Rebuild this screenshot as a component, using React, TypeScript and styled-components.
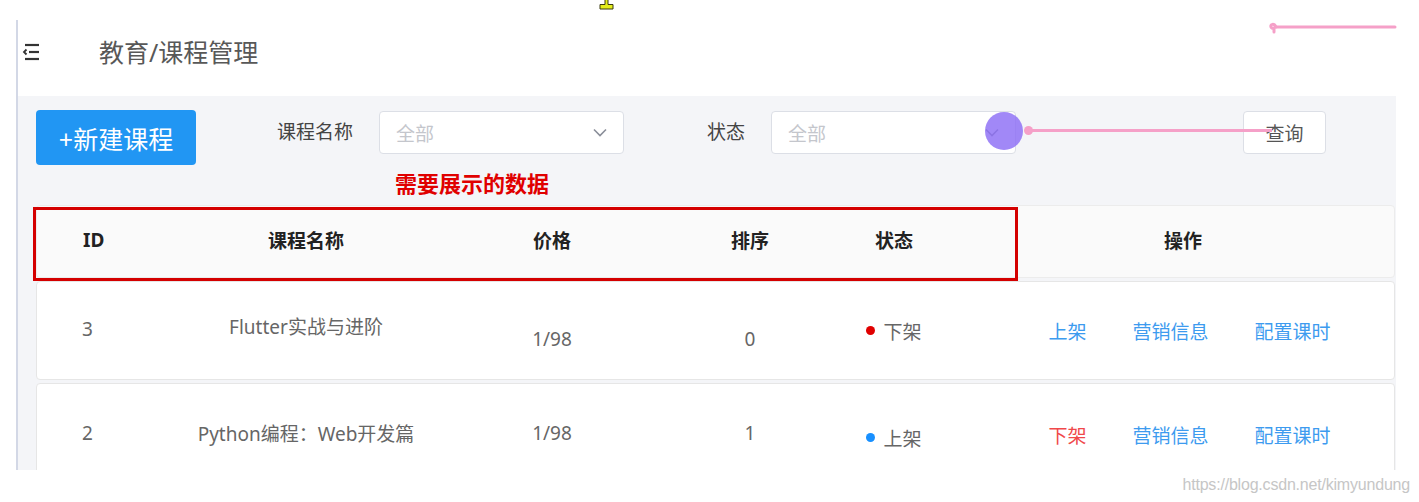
import styled, { createGlobalStyle } from 'styled-components';

const GlobalStyle = createGlobalStyle`
  html, body { margin: 0; padding: 0; background: #fff; }
  body { font-family: "Noto Sans", "Noto Sans CJK SC", sans-serif; }
  * { box-sizing: border-box; }
`;

const COLS = '144px 250px 242px 154px 134px 1fr';

const Page = styled.div`
  position: relative;
  width: 1419px;
  height: 502px;
  overflow: hidden;
  padding: 20px 0 0 16px;
`;

const Frame = styled.div`
  width: 1380px;
  height: 450px;
  border-left: 2px solid #d3d8e6;
  display: flex;
  flex-direction: column;
`;

const Header = styled.div`
  height: 76px;
  flex-shrink: 0;
  display: flex;
  align-items: center;
  padding: 0 0 12px 4px;
`;

const Title = styled.h1`
  margin: 0 0 0 60px;
  font-size: 25px;
  font-weight: 400;
  color: #585858;
  line-height: 34px;
`;

const Content = styled.div`
  flex: 1;
  background: #f4f5f8;
  padding: 14px 1px 0 18px;
  overflow: hidden;
`;

const Toolbar = styled.div`
  display: flex;
  align-items: flex-start;
  height: 55px;
`;

const PrimaryButton = styled.button`
  width: 160px;
  height: 55px;
  border: none;
  border-radius: 4px;
  background: #2196f3;
  color: #fff;
  font-family: inherit;
  font-size: 25px;
  padding: 0;
`;

const FieldLabel = styled.span<{ $gap: number }>`
  margin: 1px 0 0 ${(p) => p.$gap}px;
  line-height: 43px;
  font-size: 19px;
  color: #444;
`;

const Select = styled.div`
  margin: 1px 0 0 26px;
  width: 245px;
  height: 43px;
  background: #fff;
  border: 1px solid #dcdfe6;
  border-radius: 4px;
  display: flex;
  align-items: center;
  justify-content: space-between;
  padding: 0 16px 0 16px;
  font-size: 19px;
  color: #c4c6cc;
`;

const QueryButton = styled.button`
  margin: 1px 0 0 227px;
  width: 83px;
  height: 43px;
  background: #fff;
  border: 1px solid #dcdfe6;
  border-radius: 4px;
  font-family: inherit;
  font-size: 19px;
  color: #555;
  padding: 0;
`;

const Note = styled.div`
  margin: 3px 0 0 359px;
  font-size: 22px;
  font-weight: 700;
  line-height: 30px;
  color: #e00000;
`;

const Table = styled.div`
  position: relative;
  margin-top: 7px;
  width: 1359px;
`;

const HeadRow = styled.div`
  display: grid;
  grid-template-columns: ${COLS};
  height: 73px;
  padding-bottom: 4px;
  background: #fafafa;
  border: 1px solid #ececec;
  border-radius: 4px;
  font-size: 19px;
  font-weight: 700;
  color: #222;
`;

const BodyRow = styled.div`
  display: grid;
  grid-template-columns: ${COLS};
  height: 99px;
  margin-top: 3px;
  background: #fff;
  border: 1px solid #e6e6e6;
  border-radius: 4px;
  font-size: 19px;
  color: #666;
`;

const Cell = styled.div<{ $left?: boolean; $dy?: number; $pl?: number }>`
  display: flex;
  align-items: center;
  justify-content: ${(p) => (p.$left ? 'flex-start' : 'center')};
  padding-left: ${(p) => p.$pl ?? 0}px;
  ${(p) => {
    const dy = p.$dy ?? 0;
    return dy >= 0 ? `padding-top: ${dy * 2}px;` : `padding-bottom: ${-dy * 2}px;`;
  }}
  white-space: nowrap;
`;

const Dot = styled.span<{ $color: string }>`
  width: 9px;
  height: 9px;
  border-radius: 50%;
  background: ${(p) => p.$color};
  margin-right: 8px;
`;

const StatusText = styled.span`
  font-size: 19px;
`;

const Actions = styled.div`
  display: flex;
  gap: 46px;
  font-size: 19px;
`;

const ActionLink = styled.a<{ $danger?: boolean }>`
  color: ${(p) => (p.$danger ? '#f0484a' : '#3d9bef')};
  cursor: pointer;
`;

const Highlight = styled.div`
  position: absolute;
  left: -3px;
  top: 2px;
  width: 985px;
  height: 74px;
  border: 3px solid #d40000;
  pointer-events: none;
`;

const Footer = styled.div`
  display: flex;
  justify-content: flex-end;
  padding: 5px 9px 0 0;
`;

const Watermark = styled.span`
  font-family: "Liberation Sans", sans-serif;
  font-size: 16px;
  line-height: 20px;
  letter-spacing: -0.2px;
  color: #c6c6c6;
`;

const PointerCircle = styled.div`
  position: absolute;
  left: 985px;
  top: 112px;
  width: 38px;
  height: 38px;
  border-radius: 50%;
  background: rgba(140, 110, 245, 0.82);
`;

const PenDot = styled.div`
  position: absolute;
  left: 1024px;
  top: 126px;
  width: 9px;
  height: 9px;
  border-radius: 50%;
  background: #f5a0c8;
`;

const PenLine = styled.div`
  position: absolute;
  left: 1028px;
  top: 129px;
  width: 244px;
  height: 3px;
  background: #f5a0c8;
`;

const TopStroke = styled.svg`
  position: absolute;
  left: 1266px;
  top: 18px;
`;

const Cursor = styled.svg`
  position: absolute;
  left: 599px;
  top: -1px;
`;

const MenuIcon = () => (
  <svg width="17" height="18" viewBox="0 0 17 18" fill="none" stroke="#333" strokeWidth="2.2">
    <path d="M3 2h14" />
    <path d="M7 9h10" />
    <path d="M4.5 6.5L2 9L4.5 11.5" strokeWidth="1.8" />
    <path d="M3 16h14" />
  </svg>
);

const Chevron = () => (
  <svg width="14" height="9" viewBox="0 0 14 9" fill="none" stroke="#8a8e99" strokeWidth="1.6">
    <path d="M1 1.5l6 6 6-6" />
  </svg>
);

type Course = {
  id: number;
  name: string;
  price: string;
  sort: number;
  online: boolean;
  dy: number[];
};

const courses: Course[] = [
  { id: 3, name: 'Flutter实战与进阶', price: '1/98', sort: 0, online: false, dy: [-2, -5, 8, 8, 0, 0] },
  { id: 2, name: 'Python编程：Web开发篇', price: '1/98', sort: 1, online: true, dy: [0, 0, 0, 0, 5, 2] },
];

export default function App() {
  return (
    <>
      <GlobalStyle />
      <Page>
        <Frame>
          <Header>
            <MenuIcon />
            <Title>教育/课程管理</Title>
          </Header>
          <Content>
            <Toolbar>
              <PrimaryButton>+新建课程</PrimaryButton>
              <FieldLabel $gap={81}>课程名称</FieldLabel>
              <Select>
                <span>全部</span>
                <Chevron />
              </Select>
              <FieldLabel $gap={83}>状态</FieldLabel>
              <Select>
                <span>全部</span>
                <Chevron />
              </Select>
              <QueryButton>查询</QueryButton>
            </Toolbar>
            <Note>需要展示的数据</Note>
            <Table>
              <HeadRow>
                <Cell $left $pl={46}>ID</Cell>
                <Cell>课程名称</Cell>
                <Cell>价格</Cell>
                <Cell>排序</Cell>
                <Cell>状态</Cell>
                <Cell $pl={11}>操作</Cell>
              </HeadRow>
              {courses.map((c) => (
                <BodyRow key={c.id}>
                  <Cell $left $pl={45} $dy={c.dy[0]}>{c.id}</Cell>
                  <Cell $dy={c.dy[1]}>{c.name}</Cell>
                  <Cell $dy={c.dy[2]}>{c.price}</Cell>
                  <Cell $dy={c.dy[3]}>{c.sort}</Cell>
                  <Cell $dy={c.dy[4]}>
                    <Dot $color={c.online ? '#1890ff' : '#e00000'} />
                    <StatusText>{c.online ? '上架' : '下架'}</StatusText>
                  </Cell>
                  <Cell $pl={24} $dy={c.dy[5]}>
                    <Actions>
                      <ActionLink $danger={c.online}>{c.online ? '下架' : '上架'}</ActionLink>
                      <ActionLink>营销信息</ActionLink>
                      <ActionLink>配置课时</ActionLink>
                    </Actions>
                  </Cell>
                </BodyRow>
              ))}
              <Highlight />
            </Table>
          </Content>
        </Frame>
        <Footer>
          <Watermark>https://blog.csdn.net/kimyundung</Watermark>
        </Footer>

        <PointerCircle />
        <PenDot />
        <PenLine />
        <TopStroke width="132" height="16" viewBox="0 0 132 16" fill="none" stroke="#f5a0c8" strokeWidth="3" strokeLinecap="round">
          <path d="M10 9H129" />
          <path d="M10 9C8 5 4 6 5 9C6 11 8 10 8 10V14" />
        </TopStroke>
        <Cursor width="15" height="11" viewBox="0 0 15 11">
          <path d="M6 0.5h3v5h5v4.5H1V5.5h5z" fill="#e4ee1c" stroke="#3a3a10" strokeWidth="1" />
        </Cursor>
      </Page>
    </>
  );
}
